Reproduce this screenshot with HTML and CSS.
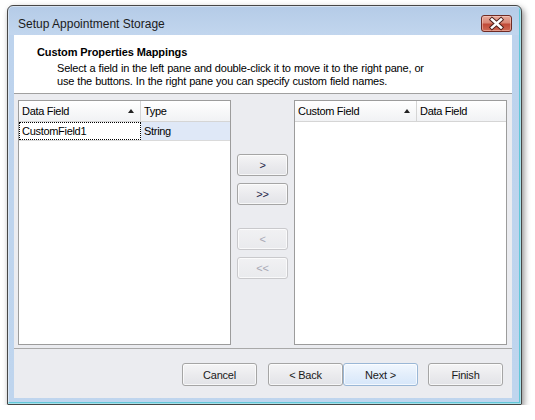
FILE: index.html
```html
<!DOCTYPE html>
<html>
<head>
<meta charset="utf-8">
<link rel="stylesheet" href="styles.css">
</head>
<body>
<div class="window">
  <div class="titlebar">
    <span class="title">Setup Appointment Storage</span>
    <div class="close">
      <svg width="29" height="15" viewBox="0 0 29 15">
        <path d="M10 3.5 L19 11.5 M19 3.5 L10 11.5" stroke="#4a1c18" stroke-width="4.4" stroke-linecap="square" fill="none"/>
        <path d="M10 3.5 L19 11.5 M19 3.5 L10 11.5" stroke="#ffffff" stroke-width="2.6" stroke-linecap="square" fill="none"/>
      </svg>
    </div>
  </div>
  <div class="client">
    <div class="header">
      <div class="h-title">Custom Properties Mappings</div>
      <div class="h-desc">Select a field in the left pane and double-click it to move it to the right pane, or<br>use the buttons. In the right pane you can specify custom field names.</div>
    </div>
    <div class="main">
      <div class="grid">
        <div class="grid-head">
          <div class="hcell c1"><span>Data Field</span><span class="sort"></span></div>
          <div class="hcell c2"><span>Type</span></div>
        </div>
        <div class="grid-row">
          <div class="cell c1 focus">CustomField1</div>
          <div class="cell c2 sel">String</div>
        </div>
      </div>
      <div class="mid">
        <button class="btn small">&gt;</button>
        <button class="btn small">&gt;&gt;</button>
        <button class="btn small disabled gap">&lt;</button>
        <button class="btn small disabled">&lt;&lt;</button>
      </div>
      <div class="grid">
        <div class="grid-head">
          <div class="hcell c1"><span>Custom Field</span><span class="sort"></span></div>
          <div class="hcell c2"><span>Data Field</span></div>
        </div>
      </div>
    </div>
    <div class="footer">
      <button class="btn wide">Cancel</button>
      <div class="pair">
        <button class="btn wide">&lt; Back</button>
        <button class="btn wide hot">Next &gt;</button>
      </div>
      <button class="btn wide">Finish</button>
    </div>
  </div>
</div>
</body>
</html>
```

FILE: styles.css
```css
* { box-sizing: border-box; }
body {
  margin: 0;
  background: #ffffff;
  font-family: "Liberation Sans", Arial, sans-serif;
  font-size: 11px;
  color: #000;
}
.window {
  margin: 5px 0 0 7px;
  width: 515px;
  height: 400px;
  border: 1px solid #474747;
  border-radius: 6px 6px 1px 1px;
  background: linear-gradient(#b4cbe7 0px, #c2d6ee 29px, #bdd3ed 29px, #bfd5ee 100%);
  padding: 0 9px 6px 6px;
  display: flex;
  flex-direction: column;
  box-shadow: 2px 3px 6px rgba(0,0,0,0.45), inset 0 0 0 1px rgba(255,255,255,0.45), inset -2px -2px 0 #62c7d8;
}
.titlebar {
  height: 29px;
  display: flex;
  justify-content: space-between;
  align-items: flex-start;
  flex: none;
}
.title {
  margin: 11px 0 0 4px;
  font-size: 12px;
  line-height: 14px;
  color: #1b1b1b;
}
.close {
  margin-top: 9px;
  width: 31px;
  height: 17px;
  border: 1px solid #6f2b24;
  border-radius: 3px;
  background: linear-gradient(#e7aa9b 0%, #d98776 45%, #c14a38 55%, #cf6a55 100%);
  box-shadow: inset 0 0 0 1px rgba(255,220,210,0.45);
  display: flex;
  align-items: center;
  justify-content: center;
}
.close svg { display: block; }
.client {
  flex: none;
  height: 363px;
  background: #ebecf0;
  display: flex;
  flex-direction: column;
}
.header {
  height: 59px;
  background: #ffffff;
  border-bottom: 1px solid #a0a0a0;
  padding: 10px 0 0 23px;
  flex: none;
}
.h-title {
  font-weight: bold;
  line-height: 14px;
  letter-spacing: -0.1px;
}
.h-desc {
  margin: 3px 0 0 20px;
  line-height: 13px;
  letter-spacing: -0.2px;
  word-spacing: 0.3px;
}
.main {
  height: 255px;
  flex: none;
  display: flex;
  padding: 6px 5px 0 4px;
  border-bottom: 1px solid #a9a9a9;
}
.grid {
  width: 213px;
  height: 245px;
  background: #ffffff;
  border: 1px solid #9c9c9c;
}
.grid-head {
  display: flex;
  height: 21px;
  background: linear-gradient(#ffffff, #f1f2f4);
  border-bottom: 1px solid #d5d5d5;
}
.hcell {
  display: flex;
  align-items: center;
  padding: 0 3px;
  line-height: 14px;
  letter-spacing: -0.3px;
}
.c1 { width: 122px; border-right: 1px solid #d5d5d5; justify-content: space-between; }
.c2 { flex: 1; }
.sort {
  width: 0;
  height: 0;
  border-left: 3.5px solid transparent;
  border-right: 3.5px solid transparent;
  border-bottom: 4px solid #222;
  margin-right: 3px;
}
.grid-row {
  display: flex;
  height: 19px;
  border-bottom: 1px solid #dadada;
}
.cell {
  display: flex;
  align-items: center;
  padding: 0 3px;
  letter-spacing: -0.3px;
}
.cell.focus {
  border: 1px dotted #000;
  padding-left: 2px;
}
.cell.sel { background: #dfe8f7; padding-left: 3px; }
.mid {
  width: 51px;
  margin: 0 6px;
  display: flex;
  flex-direction: column;
  padding-top: 54px;
  gap: 7px;
}
.btn {
  font-family: "Liberation Sans", Arial, sans-serif;
  font-size: 11px;
  letter-spacing: -0.2px;
  color: #1a1a1a;
  border: 1px solid #a5a5a5;
  border-radius: 3px;
  background: linear-gradient(#f5f5f6 0%, #ebebee 50%, #e2e3e7 100%);
  box-shadow: inset 0 0 0 1px rgba(255,255,255,0.7);
  padding: 0;
  margin: 0;
  display: flex;
  align-items: center;
  justify-content: center;
}
.btn.small { width: 51px; height: 22px; color: #26264a; }
.btn.gap { margin-top: 16px; }
.btn.disabled {
  color: #a8a8b4;
  border-color: #c9c9cc;
  background: linear-gradient(#f1f1f3, #e9eaed);
}
.footer {
  flex: none;
  display: flex;
  justify-content: flex-end;
  padding: 14px 9px 0 0;
  gap: 10px;
}
.footer > .btn:first-child { margin-right: 1px; }
.pair { display: flex; }
.btn.wide { width: 75px; height: 23px; }
.btn.hot {
  border-color: #9ab7d6;
  background: linear-gradient(#f1f7fe 0%, #e3eefb 50%, #d7e7fa 100%);
}
```
